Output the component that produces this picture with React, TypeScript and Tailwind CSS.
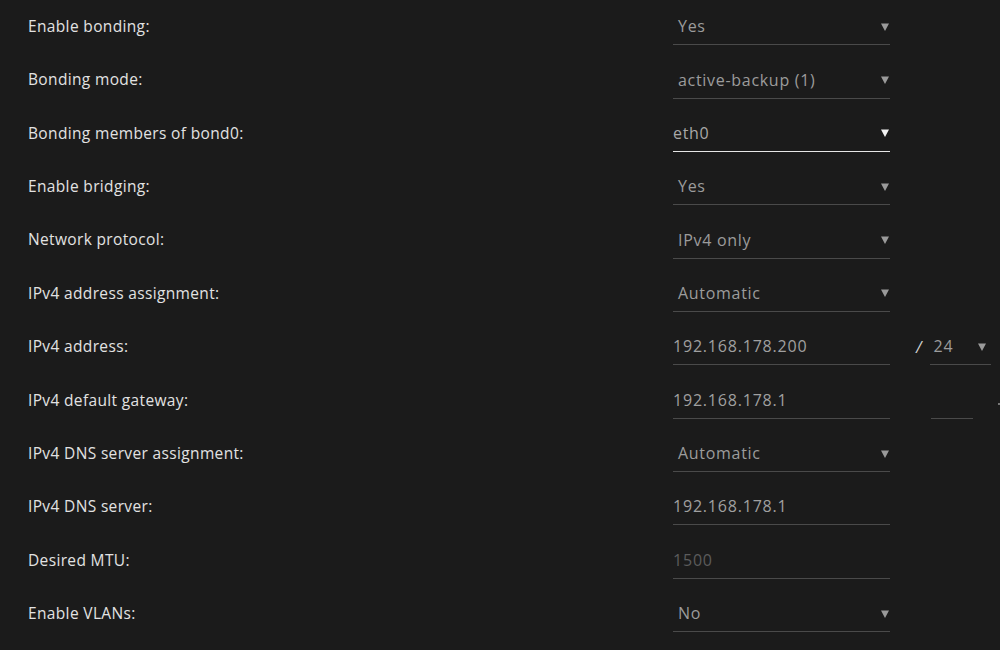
import React from "react";

type Row = {
  label: string;
  kind: "select" | "input";
  value: string;
  focused?: boolean;
  disabled?: boolean;
  extra?: "mask" | "maskEmpty";
};

const rows: Row[] = [
  { label: "Enable bonding:", kind: "select", value: "Yes" },
  { label: "Bonding mode:", kind: "select", value: "active-backup (1)" },
  { label: "Bonding members of bond0:", kind: "select", value: "eth0", focused: true },
  { label: "Enable bridging:", kind: "select", value: "Yes" },
  { label: "Network protocol:", kind: "select", value: "IPv4 only" },
  { label: "IPv4 address assignment:", kind: "select", value: "Automatic" },
  { label: "IPv4 address:", kind: "input", value: "192.168.178.200", extra: "mask" },
  { label: "IPv4 default gateway:", kind: "input", value: "192.168.178.1", extra: "maskEmpty" },
  { label: "IPv4 DNS server assignment:", kind: "select", value: "Automatic" },
  { label: "IPv4 DNS server:", kind: "input", value: "192.168.178.1" },
  { label: "Desired MTU:", kind: "input", value: "1500", disabled: true },
  { label: "Enable VLANs:", kind: "select", value: "No" },
];

function Arrow({ white }: { white?: boolean }) {
  return (
    <svg width="8" height="8" viewBox="0 0 8 8" className="shrink-0 mt-[1px]">
      <path d="M0 0.5 L8 0.5 L4 8 Z" fill={white ? "#f2f2f2" : "#9a9a9a"} />
    </svg>
  );
}

export default function App() {
  return (
    <div
      className="w-[1000px] h-[650px] bg-[#1b1b1b] overflow-hidden"
      style={{ fontFamily: '"Open Sans", "Noto Sans", sans-serif' }}
    >
      {rows.map((r) => (
        <div key={r.label} className="flex items-center h-[53.36px]">
          <div className="w-[673px] shrink-0 pl-[28px] text-[15.5px] text-[#e2e2e2] tracking-[0.35px]">
            {r.label}
          </div>
          {r.kind === "select" ? (
            <div
              className={
                "w-[217px] shrink-0 h-[37px] flex items-center justify-between border-b " +
                (r.focused ? "border-[#e6e6e6] pl-0 pr-[1px]" : "border-[#4a4a4a] pl-[5px] pr-[1px]")
              }
            >
              <span
                className={
                  "text-[16px] tracking-[0.7px] " +
                  (r.focused ? "text-[#a8a8a8]" : "text-[#9c9c9c]")
                }
              >
                {r.value}
              </span>
              <Arrow white={r.focused} />
            </div>
          ) : (
            <div className="w-[217px] shrink-0 h-[37px] flex items-center border-b border-[#4a4a4a]">
              <span
                className={
                  "text-[16px] tracking-[0.8px] " +
                  (r.disabled ? "text-[#5c5c5c]" : "text-[#a0a0a0]")
                }
              >
                {r.value}
              </span>
            </div>
          )}
          {r.extra === "mask" && (
            <div className="flex items-center shrink-0">
              <span className="ml-[26px] text-[16px] text-[#d0d0d0] italic">/</span>
              <div className="ml-[8px] w-[61px] h-[37px] flex items-center justify-between pl-[4px] pr-[5px] border-b border-[#4a4a4a]">
                <span className="text-[16px] tracking-[0.75px] text-[#9c9c9c]">24</span>
                <Arrow />
              </div>
            </div>
          )}
          {r.extra === "maskEmpty" && (
            <div className="flex items-center shrink-0">
              <div className="ml-[41px] w-[42px] h-[37px] border-b border-[#4a4a4a]" />
              <div className="ml-[25px] w-[2px] h-[2px] mt-[8px] bg-[#777]" />
            </div>
          )}
        </div>
      ))}
    </div>
  );
}
